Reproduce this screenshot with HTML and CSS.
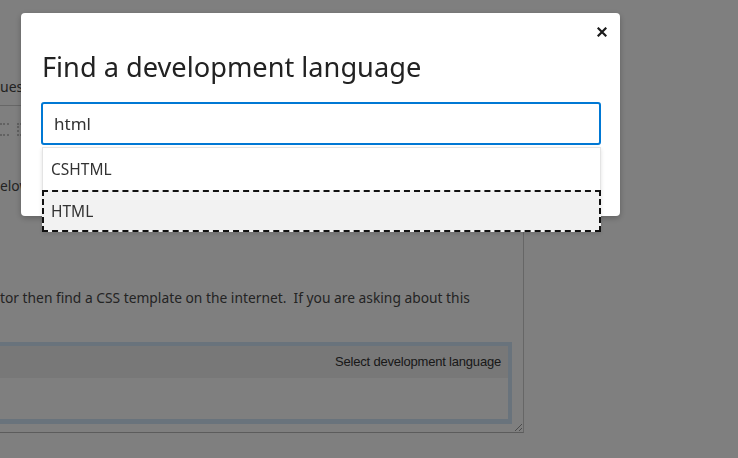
FILE: index.html
```html
<!DOCTYPE html>
<html lang="en">
<head>
    <meta charset="UTF-8">
    <title>Find a development language</title>
    <link rel="stylesheet" href="styles.css">
</head>
<body>

<!-- page behind the dialog -->
<div class="editor">
    <div class="tabs"><span class="tab">uest</span></div>
    <div class="toolbar">
        <span class="tool-icon"></span>
        <span class="tool-icon dots"></span>
    </div>
    <p class="line line-top">elow</p>
    <p class="line line-mid">tor then find a CSS template on the internet.&nbsp; If you are asking about this</p>
    <div class="lang-box">
        <div class="lang-header">Select development language</div>
        <div class="lang-body"></div>
    </div>
    <span class="grip"></span>
</div>

<div class="overlay">
    <div class="modal">
        <div class="modal-top">
            <button class="close-button" aria-label="Close">
                <svg width="10" height="10" viewBox="0 0 10 10">
                    <path d="M1.5 1.5 L8.5 8.5 M8.5 1.5 L1.5 8.5" stroke="#1a1a1a" stroke-width="2.2" stroke-linecap="square"/>
                </svg>
            </button>
        </div>
        <h1 class="modal-title">Find a development language</h1>
        <div class="search">
            <input type="text" class="search-input" value="html">
            <ul class="suggestions">
                <li class="suggestion">CSHTML</li>
                <li class="suggestion active">HTML</li>
            </ul>
        </div>
    </div>
</div>

</body>
</html>
```

FILE: styles.css
```css
/* Global */
body {
    margin: 0;
    background-color: #ffffff;
    font-family: 'Noto Sans', 'Open Sans', sans-serif;
    color: #444;
}

/* Page behind the overlay */
.editor {
    position: relative;
    width: 523px;
    height: 372px;
    margin-top: 60px;
    border-right: 1px solid #cdcdcd;
    border-bottom: 1px solid #b8b8b8;
}

.tabs {
    height: 45px;
    width: 120px;
    border-bottom: 1px solid #cfcfcf;
    display: flex;
    align-items: flex-end;
    font-size: 14px;
    line-height: 19px;
    color: #444;
}

.tab {
    padding-bottom: 9px;
}

.toolbar {
    display: flex;
    gap: 8px;
    height: 46px;
    align-items: center;
}

.tool-icon {
    width: 9px;
    height: 9px;
    border-top: 2px dotted #c4c4c4;
    border-bottom: 2px dotted #c4c4c4;
}

.tool-icon.dots {
    border-left: 2px dotted #c4c4c4;
    border-right: 2px dotted #c4c4c4;
    width: 5px;
}

.line {
    margin: 0;
    font-size: 13.8px;
    line-height: 19px;
    color: #484848;
}

.line-top {
    margin-top: 24px;
}

.line-mid {
    margin-top: 93px;
}

.lang-box {
    margin-top: 35px;
    width: 512px;
    border-top: 4px solid #d2e6f8;
    border-bottom: 5px solid #d2e6f8;
}

.lang-header {
    background-color: #f0f0f0;
    height: 32px;
    line-height: 32px;
    text-align: right;
    padding-right: 7px;
    border-right: 4px solid #d2e6f8;
    font-family: 'Liberation Sans', Arial, sans-serif;
    font-size: 13px;
    letter-spacing: -0.2px;
    color: #333;
}

.lang-body {
    height: 41px;
    background-color: #ffffff;
    border-right: 4px solid #d2e6f8;
}

.grip {
    position: absolute;
    right: 1px;
    bottom: 1px;
    width: 7px;
    height: 7px;
    background: linear-gradient(135deg, transparent 45%, #999 45%, #999 55%, transparent 55%, transparent 75%, #999 75%, #999 85%, transparent 85%);
}

/* Overlay + dialog */
.overlay {
    position: fixed;
    inset: 0;
    background-color: rgba(0, 0, 0, 0.5);
}

.modal {
    width: 559px;
    margin: 13px 0 0 21px;
    padding: 0 20px 71px;
    background-color: #ffffff;
    border-radius: 4px;
    box-shadow: 0 2px 6px rgba(0, 0, 0, 0.25);
}

.modal-top {
    display: flex;
    justify-content: flex-end;
    height: 20px;
    padding-top: 9px;
    margin-right: -20px;
}

.close-button {
    display: flex;
    align-items: center;
    justify-content: center;
    border: none;
    background: none;
    width: 36px;
    height: 20px;
    padding: 0;
    cursor: pointer;
}

.modal-title {
    margin: 5px 0 15px 1px;
    font-size: 27.2px;
    font-weight: normal;
    line-height: 40px;
    color: #222;
}

.search {
    position: relative;
}

.search-input {
    box-sizing: border-box;
    width: 560px;
    height: 43px;
    border: 2px solid #0078d4;
    border-radius: 3px;
    padding: 0 11px;
    font-family: 'Noto Sans', 'Open Sans', sans-serif;
    font-size: 17px;
    color: #333;
    outline: none;
    margin: 0;
    display: block;
}

.suggestions {
    position: absolute;
    top: 45px;
    left: 1px;
    width: 557px;
    margin: 0;
    padding: 0;
    list-style: none;
    background-color: #ffffff;
    border: 1px solid #e4e4e4;
    box-shadow: 0 2px 4px rgba(0, 0, 0, 0.12);
}

.suggestion {
    height: 42px;
    line-height: 42px;
    padding-left: 8px;
    font-size: 15.5px;
    color: #333;
}

.suggestion.active {
    background-color: #f2f2f2;
    border: 2px dashed #111;
    height: 38px;
    line-height: 38px;
    padding-left: 7px;
    margin: 0 -1px -1px;
}
```
